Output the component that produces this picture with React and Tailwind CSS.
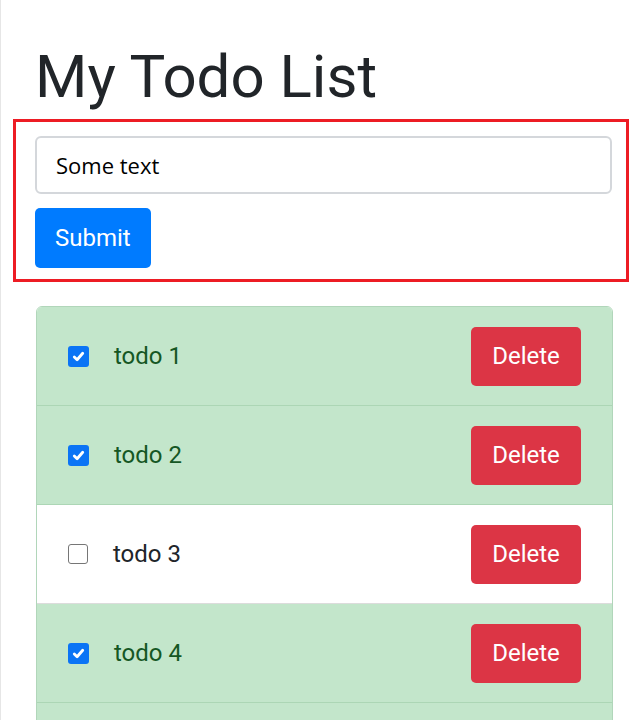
import React, { useState } from 'react';

const initialTodos = [
  { id: 1, text: 'todo 1', done: true },
  { id: 2, text: 'todo 2', done: true },
  { id: 3, text: 'todo 3', done: false },
  { id: 4, text: 'todo 4', done: true },
  { id: 5, text: 'todo 5', done: true },
];

function Check({ checked }) {
  if (!checked) {
    return <span className="w-5 h-5 rounded-[3px] border border-[#767676] bg-white shrink-0" />;
  }
  return (
    <span className="w-[21px] h-[21px] rounded-[3px] bg-[#0b74f5] shrink-0 flex items-center justify-center">
      <svg viewBox="0 0 16 16" className="w-[15px] h-[15px]" fill="none" stroke="white" strokeWidth="3" strokeLinecap="round" strokeLinejoin="round">
        <path d="M3.5 8.5l3 3 6-7" />
      </svg>
    </span>
  );
}

export default function App() {
  const [text, setText] = useState('Some text');
  const [todos, setTodos] = useState(initialTodos);

  const toggle = (id) => setTodos(todos.map((t) => (t.id === id ? { ...t, done: !t.done } : t)));
  const remove = (id) => setTodos(todos.filter((t) => t.id !== id));

  return (
    <div className="min-h-screen bg-white border-l border-[#e6e6e6] font-['Roboto',sans-serif] text-[#212529] overflow-hidden">
      <h1 className="ml-[34px] pt-[41px] text-[60px] leading-[1.2] font-normal">My Todo List</h1>

      <form
        onSubmit={(e) => e.preventDefault()}
        className="ml-[12px] mr-[8px] mt-[6px] border-[3px] border-[#ed1c24] pt-[14px] pl-[19px] pr-[14px] pb-[11px] flex flex-col items-start gap-[14px]"
      >
        <input
          value={text}
          onChange={(e) => setText(e.target.value)}
          className="w-full h-[58px] rounded-[6px] border-2 border-[#d4d7db] px-[19px] text-[22px] text-black font-['Open_Sans',sans-serif] outline-none"
        />
        <button type="submit" className="h-[60px] px-[20px] rounded-[5px] bg-[#007bff] text-white text-[24px]">
          Submit
        </button>
      </form>

      <ul className="ml-[35px] w-[577px] mt-[24px] rounded-t-[6px] border border-[#b1d6ba] overflow-hidden">
        {todos.map((t) => (
          <li
            key={t.id}
            className={
              t.done
                ? 'h-[99px] flex items-center pl-[31px] pr-[31px] bg-[#c3e6cb] text-[#155724] border-b border-[#acd6b5]'
                : 'h-[99px] flex items-center pl-[31px] pr-[31px] bg-white text-[#212529] border-b border-[#dcdcdc]'
            }
          >
            <button type="button" onClick={() => toggle(t.id)} className="flex">
              <Check checked={t.done} />
            </button>
            <span className="ml-[25px] text-[24px] flex-1">{t.text}</span>
            <button
              type="button"
              onClick={() => remove(t.id)}
              className="h-[59px] w-[110px] rounded-[5px] bg-[#dc3545] text-white text-[24px]"
            >
              Delete
            </button>
          </li>
        ))}
      </ul>
    </div>
  );
}
